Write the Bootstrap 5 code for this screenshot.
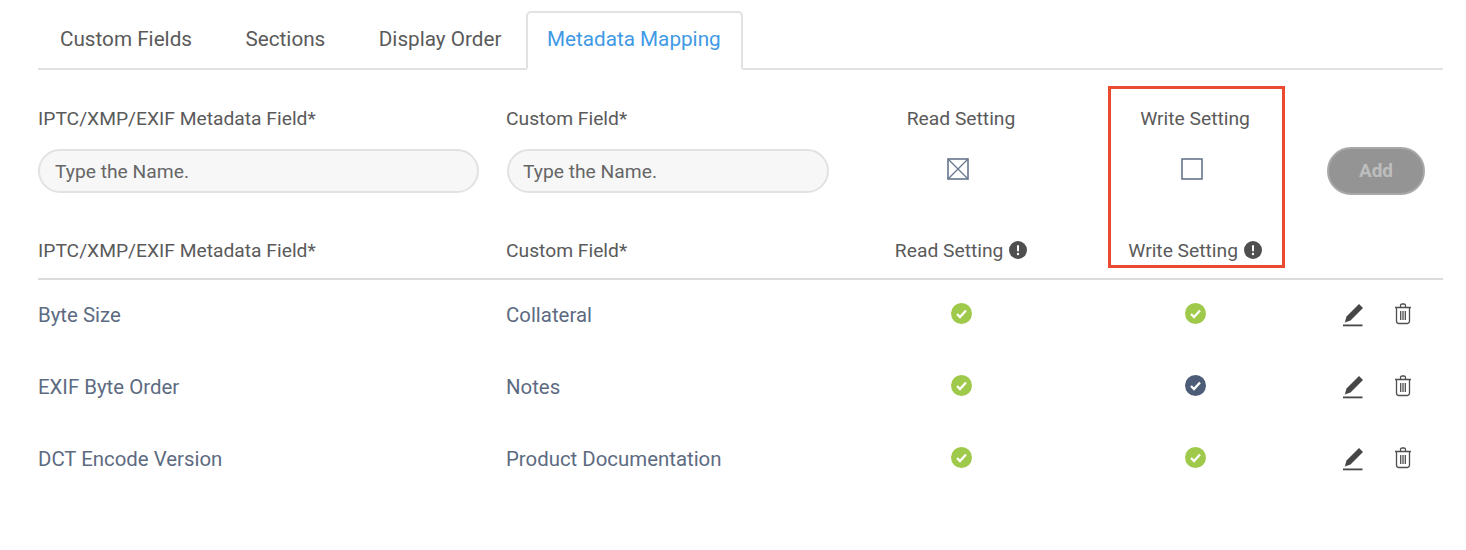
<!DOCTYPE html>
<html lang="en">
<head>
<meta charset="utf-8">
<title>Metadata Mapping</title>
<link href="https://cdn.jsdelivr.net/npm/bootstrap@5.3.0/dist/css/bootstrap.min.css" rel="stylesheet">
<style>
body{font-family:Roboto,"Liberation Sans",sans-serif;background:#fff;color:#5a5a5a;overflow:hidden}
.page-wrap{padding:11px 23px 0 38px}
.tab-bar{border-bottom:2px solid #e2e2e2;gap:9.5px;height:59px}
.tab-bar .nav-link{color:#5a5a5a;font-size:20.7px;line-height:24px;padding:16px 22px 0;height:59px;border:0;margin:0}
.tab-bar .nav-link.active{color:#3f9ae5;border:2px solid #e2e2e2;border-bottom:2px solid #fff;border-radius:5px 5px 0 0;padding:14px 20px 0 19px;margin-left:-7px;margin-bottom:-2px;background:#fff}
.map-grid{display:grid;grid-template-columns:468px 338px 234px 234px 131px;align-items:center}
.form-grid{padding-top:37px;height:160px;align-content:start}
.field-label{font-size:19.25px;line-height:24px;color:#5a5a5a}
.mid{text-align:center}
.name-input{height:44px;border-radius:22px;background:#f7f7f7;border:2px solid #e2e2e2;font-size:19.25px;padding:0 15px;color:#5a5a5a;box-shadow:none}
.name-input::placeholder{color:#666;opacity:1}
.input-a{width:441px}
.input-b{width:322px;margin-left:1px;padding-left:14px}
.form-row-gap{margin-top:16px}
.add-btn{width:98px;height:48px;border-radius:24px;background:#949494;border:2px solid #a8a8a8;color:#bdbdbd;font-size:19px;font-weight:700;margin-left:15px;opacity:1;padding:0}
.add-btn:disabled{background:#949494;border-color:#a8a8a8;color:#bdbdbd;opacity:1}
.box-wrap{display:flex;justify-content:center;padding-right:7px;padding-bottom:4px}
.head-grid{height:50px;border-bottom:2px solid #dcdcdc;padding-bottom:6px}
.data-row{height:72px;color:#5d6b82}
.data-cell{font-size:20.4px;line-height:24px;padding-bottom:2px}
.state-cell{display:flex;justify-content:center;padding-bottom:5px}
.tool-cell{display:flex;gap:31px;padding-left:31px;padding-bottom:2px}
.hi-box{position:absolute;left:1108px;top:86px;width:177px;height:182px;border:3px solid #ea4a2f;pointer-events:none}
svg{display:block}
.ib{display:inline-block;vertical-align:-2px;margin-left:1px}
</style>
</head>
<body>
<svg width="0" height="0" class="position-absolute">
<defs>
<symbol id="pen" viewBox="0 0 20 24"><path d="M16 1 20 5 7.500 17.500 1.800 19.500 3.500 13.500z" fill="#464646"/><rect x="0" y="21.500" width="19.500" height="1.800" fill="#464646"/></symbol>
<symbol id="bin" viewBox="0 0 18 22"><path d="M1 4.500h16M6.500 4V2.500a1.500 1.500 0 0 1 1.500-1.500h2a1.500 1.500 0 0 1 1.500 1.500V4M2.500 4.500V18a2.500 2.500 0 0 0 2.500 2.500h8a2.500 2.500 0 0 0 2.500-2.500V4.500M6.700 8v9M9 8v9M11.300 8v9" fill="none" stroke="#4f4f4f" stroke-width="1.300"/></symbol>
<symbol id="ok" viewBox="0 0 21 21"><path d="M6 11l3 3 6-6.500" fill="none" stroke="#fff" stroke-width="2.300"/></symbol>
<symbol id="warn" viewBox="0 0 18 18"><circle cx="9" cy="9" r="9" fill="#4f4f4f"/><rect x="8" y="4" width="2" height="6.500" rx="1" fill="#fff"/><circle cx="9" cy="13" r="1.200" fill="#fff"/></symbol>
</defs>
</svg>
<div class="page-wrap">
<ul class="nav tab-bar">
<li class="nav-item"><a class="nav-link" href="#">Custom Fields</a></li>
<li class="nav-item"><a class="nav-link" href="#">Sections</a></li>
<li class="nav-item"><a class="nav-link" href="#">Display Order</a></li>
<li class="nav-item"><a class="nav-link active" href="#">Metadata Mapping</a></li>
</ul>
<div class="map-grid form-grid">
<div class="field-label">IPTC/XMP/EXIF Metadata Field*</div>
<div class="field-label">Custom Field*</div>
<div class="field-label mid">Read Setting</div>
<div class="field-label mid">Write Setting</div>
<div></div>
<div class="form-row-gap"><input class="form-control name-input input-a" placeholder="Type the Name."></div>
<div class="form-row-gap"><input class="form-control name-input input-b" placeholder="Type the Name."></div>
<div class="form-row-gap box-wrap"><svg width="22" height="22" viewBox="0 0 22 22"><rect x="1" y="1" width="20" height="20" fill="#fff" stroke="#66758d" stroke-width="1.600"/><path d="M1 1 21 21M21 1 1 21" stroke="#66758d" stroke-width="1.200"/></svg></div>
<div class="form-row-gap box-wrap"><svg width="22" height="22" viewBox="0 0 22 22"><rect x="1" y="1" width="20" height="20" fill="#fff" stroke="#66758d" stroke-width="1.600"/></svg></div>
<div class="form-row-gap"><button class="btn add-btn" disabled>Add</button></div>
</div>
<div class="map-grid head-grid">
<div class="field-label">IPTC/XMP/EXIF Metadata Field*</div>
<div class="field-label">Custom Field*</div>
<div class="field-label mid">Read Setting <svg class="ib" width="18" height="18"><use href="#warn"/></svg></div>
<div class="field-label mid">Write Setting <svg class="ib" width="18" height="18"><use href="#warn"/></svg></div>
<div></div>
</div>
<div>
<div class="map-grid data-row">
<div class="data-cell">Byte Size</div><div class="data-cell">Collateral</div>
<div class="state-cell"><svg width="21" height="21"><circle cx="10.500" cy="10.500" r="10.500" fill="#9fc94a"/><use href="#ok"/></svg></div>
<div class="state-cell"><svg width="21" height="21"><circle cx="10.500" cy="10.500" r="10.500" fill="#9fc94a"/><use href="#ok"/></svg></div>
<div class="tool-cell"><svg width="20" height="24"><use href="#pen"/></svg><svg width="18" height="22"><use href="#bin"/></svg></div>
</div>
<div class="map-grid data-row">
<div class="data-cell">EXIF Byte Order</div><div class="data-cell">Notes</div>
<div class="state-cell"><svg width="21" height="21"><circle cx="10.500" cy="10.500" r="10.500" fill="#9fc94a"/><use href="#ok"/></svg></div>
<div class="state-cell"><svg width="21" height="21"><circle cx="10.500" cy="10.500" r="10.500" fill="#4e5d77"/><use href="#ok"/></svg></div>
<div class="tool-cell"><svg width="20" height="24"><use href="#pen"/></svg><svg width="18" height="22"><use href="#bin"/></svg></div>
</div>
<div class="map-grid data-row">
<div class="data-cell">DCT Encode Version</div><div class="data-cell">Product Documentation</div>
<div class="state-cell"><svg width="21" height="21"><circle cx="10.500" cy="10.500" r="10.500" fill="#9fc94a"/><use href="#ok"/></svg></div>
<div class="state-cell"><svg width="21" height="21"><circle cx="10.500" cy="10.500" r="10.500" fill="#9fc94a"/><use href="#ok"/></svg></div>
<div class="tool-cell"><svg width="20" height="24"><use href="#pen"/></svg><svg width="18" height="22"><use href="#bin"/></svg></div>
</div>
</div>
</div>
<div class="hi-box"></div>
<script src="https://cdn.jsdelivr.net/npm/bootstrap@5.3.0/dist/js/bootstrap.bundle.min.js"></script>
</body>
</html>
